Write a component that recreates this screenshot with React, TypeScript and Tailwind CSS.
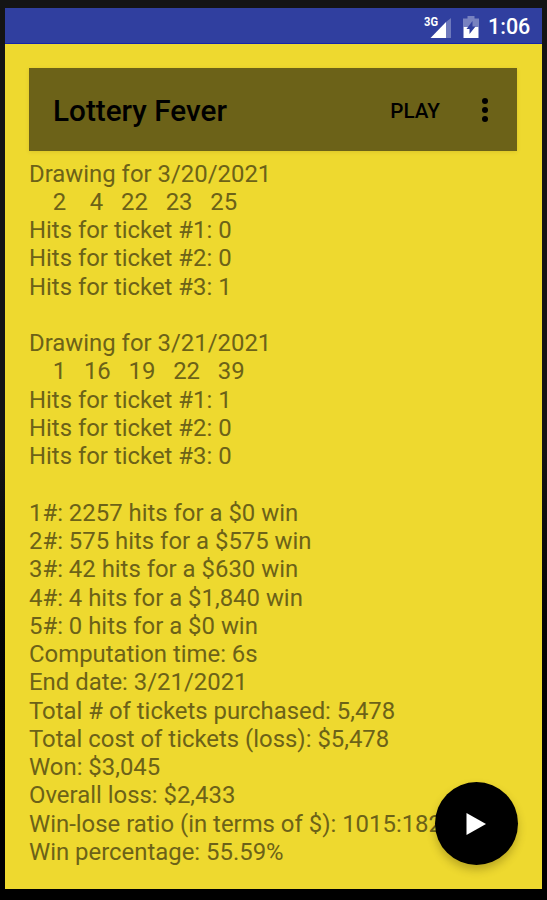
import React from "react";

const results = [
  "Drawing for 3/20/2021",
  "    2    4   22   23   25",
  "Hits for ticket #1: 0",
  "Hits for ticket #2: 0",
  "Hits for ticket #3: 1",
  "",
  "Drawing for 3/21/2021",
  "    1   16   19   22   39",
  "Hits for ticket #1: 1",
  "Hits for ticket #2: 0",
  "Hits for ticket #3: 0",
  "",
  "1#: 2257 hits for a $0 win",
  "2#: 575 hits for a $575 win",
  "3#: 42 hits for a $630 win",
  "4#: 4 hits for a $1,840 win",
  "5#: 0 hits for a $0 win",
  "Computation time: 6s",
  "End date: 3/21/2021",
  "Total # of tickets purchased: 5,478",
  "Total cost of tickets (loss): $5,478",
  "Won: $3,045",
  "Overall loss: $2,433",
  "Win-lose ratio (in terms of $): 1015:1826",
  "Win percentage: 55.59%",
];

function SignalIcon() {
  return (
    <svg width="28" height="24" viewBox="0 0 28 24">
      <path d="M27 3v20h-5V7z" fill="#fff" fillOpacity="0.3" />
      <path d="M22 7v16H6.500z" fill="#fff" />
      <text x="0" y="11" fontSize="12" fontWeight="700" textLength="14" lengthAdjust="spacingAndGlyphs" fill="#fff">
        3G
      </text>
    </svg>
  );
}

function BatteryIcon() {
  return (
    <svg width="16" height="22" viewBox="0 0 16 22">
      <path d="M4.500 0h7v2.500H16V11H0V2.500h4.500z" fill="#fff" fillOpacity="0.35" />
      <path d="M0.500 11h15v11h-15z" fill="#fff" />
      <path d="M9.500 5v5.500h3L6.500 18v-5h-3z" fill="#303f9f" />
    </svg>
  );
}

function StatusBar() {
  return (
    <div className="flex h-9 shrink-0 items-center justify-end border-b border-[#1625a8] bg-[#303f9f] pt-0.5 pr-3 text-white">
      <SignalIcon />
      <div className="ml-[11px] flex">
        <BatteryIcon />
      </div>
      <span className="ml-[9px] w-[42px] pt-px text-[21.5px] leading-8 font-medium whitespace-nowrap">1:06</span>
    </div>
  );
}

function Toolbar() {
  return (
    <div className="flex h-[83px] shrink-0 items-center bg-[#6c6218] pl-6 text-black shadow-[0_1px_4px_rgba(80,60,0,0.12)]">
      <h1 className="flex-1 pt-0.5 text-[29.7px] leading-9 font-medium">Lottery Fever</h1>
      <button className="pt-0.5 text-[20.7px] leading-8 font-medium">PLAY</button>
      <button className="mr-[25px] ml-[38px]">
        <svg width="14" height="26" viewBox="0 0 14 26">
          <circle cx="7" cy="4" r="3" />
          <circle cx="7" cy="13" r="3" />
          <circle cx="7" cy="22" r="3" />
        </svg>
      </button>
    </div>
  );
}

export default function App() {
  return (
    <div className="h-[900px] w-[547px] overflow-hidden bg-gradient-to-b from-[#141414] from-50% to-black pt-2 pr-[5px] pl-[5px] font-['Roboto',sans-serif]">
      <div className="relative flex h-[881px] flex-col overflow-hidden bg-[#eed92f]">
        <StatusBar />
        <div className="flex flex-col pt-6 pr-[25px] pl-6">
          <Toolbar />
          {/* Drawing results */}
          <div className="pt-[8.6px] text-[23.9px] leading-[28.27px] text-[#6c6218]">
            {results.map((line, i) => (
              <p key={i} className="h-[28.27px] whitespace-pre">
                {line}
              </p>
            ))}
          </div>
        </div>

        {/* Floating play button */}
        <button className="absolute right-[24.5px] bottom-[24px] flex size-[83px] items-center justify-center rounded-full bg-black shadow-[0_5px_8px_rgba(70,55,0,0.3)]">
          <svg width="20" height="24" viewBox="0 0 20 24">
            <path d="M0.500 1v22L20 12z" fill="#fff" />
          </svg>
        </button>
      </div>
    </div>
  );
}
